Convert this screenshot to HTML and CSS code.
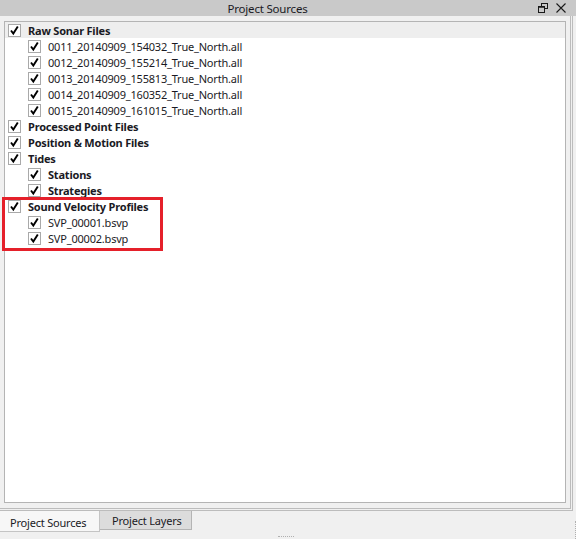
FILE: index.html
```html
<!DOCTYPE html>
<html lang="en">

<head>
    <meta charset="UTF-8">
    <title>Project Sources</title>
    <link rel="stylesheet" href="styles.css">
</head>

<body>
    <div class="window">
        <div class="titlebar">
            <div class="title">Project Sources</div>
            <div class="title-icons">
                <svg width="11" height="10" viewBox="0 0 11 10">
                    <rect x="3.5" y="0.5" width="6" height="5" fill="none" stroke="#1a1a1a"/>
                    <rect x="0.5" y="3.5" width="6" height="6" fill="#c9c9c9" stroke="#1a1a1a"/>
                    <line x1="0.5" y1="4" x2="6.5" y2="4" stroke="#1a1a1a" stroke-width="1.5"/>
                </svg>
                <svg width="10" height="10" viewBox="0 0 10 10">
                    <path d="M0.5 0.5 L9.5 9.5 M9.5 0.5 L0.5 9.5" stroke="#1a1a1a" stroke-width="1.1"/>
                </svg>
            </div>
        </div>

        <div class="frame">
            <div class="tree">
                <div class="row current">
                    <span class="check"></span><span class="label bold">Raw Sonar Files</span>
                </div>
                <div class="row child">
                    <span class="check"></span><span class="label">0011_20140909_154032_True_North.all</span>
                </div>
                <div class="row child">
                    <span class="check"></span><span class="label">0012_20140909_155214_True_North.all</span>
                </div>
                <div class="row child">
                    <span class="check"></span><span class="label">0013_20140909_155813_True_North.all</span>
                </div>
                <div class="row child">
                    <span class="check"></span><span class="label">0014_20140909_160352_True_North.all</span>
                </div>
                <div class="row child">
                    <span class="check"></span><span class="label">0015_20140909_161015_True_North.all</span>
                </div>
                <div class="row">
                    <span class="check"></span><span class="label bold">Processed Point Files</span>
                </div>
                <div class="row">
                    <span class="check"></span><span class="label bold">Position &amp; Motion Files</span>
                </div>
                <div class="row">
                    <span class="check"></span><span class="label bold">Tides</span>
                </div>
                <div class="row child">
                    <span class="check"></span><span class="label bold">Stations</span>
                </div>
                <div class="row child">
                    <span class="check"></span><span class="label bold">Strategies</span>
                </div>
                <div class="row">
                    <span class="check"></span><span class="label bold">Sound Velocity Profiles</span>
                </div>
                <div class="row child">
                    <span class="check"></span><span class="label">SVP_00001.bsvp</span>
                </div>
                <div class="row child">
                    <span class="check"></span><span class="label">SVP_00002.bsvp</span>
                </div>
            </div>
        </div>

        <div class="tabs">
            <div class="tab active">Project Sources</div>
            <div class="tab">Project Layers</div>
        </div>

        <!-- annotation box over the SVP group -->
        <div class="highlight"></div>
        <div class="grip-h"></div>
        <div class="grip-v"></div>
    </div>
</body>

</html>
```

FILE: styles.css
```css
* {
    margin: 0;
    padding: 0;
    box-sizing: border-box;
}

body {
    font-family: 'Noto Sans', 'Open Sans', sans-serif;
    font-size: 11px;
    letter-spacing: -0.2px;
    color: #1a1a24;
    background: #f0f0f0;
}

.window {
    position: relative;
    width: 576px;
    height: 539px;
    background: #f0f0f0;
    overflow: hidden;
}

.titlebar {
    height: 16px;
    background: #c9c9c9;
    display: flex;
    align-items: center;
}

.title {
    flex: 1;
    text-align: center;
    line-height: 16px;
    padding-top: 1px;
    font-size: 11.5px;
}

.title-icons {
    width: 41px;
    display: flex;
    align-items: center;
    gap: 7px;
    padding-left: 3px;
    margin-top: -1px;
}

.title-icons svg {
    display: block;
}

.frame {
    width: 573px;
    height: 495px;
    padding: 5px 4px 5px 4px;
    border-right: 3px double #bcbcbc;
    border-bottom: 3px double #bcbcbc;
}

.tree {
    height: 100%;
    background: #fff;
    border: 1px solid #b4b4b4;
    width: 562px;
}

.row {
    height: 16px;
    display: flex;
    align-items: center;
    padding-left: 3px;
}

.row.current {
    background: #eeeeee;
}

.row.child {
    padding-left: 23px;
}

.check {
    width: 13px;
    height: 13px;
    border: 1px solid #a9a9a9;
    background: #fff url("data:image/svg+xml,%3Csvg xmlns='http://www.w3.org/2000/svg' width='11' height='11'%3E%3Cpath d='M2 5.5 L4.3 8.5 L8.8 1.5' fill='none' stroke='%23000' stroke-width='1.9'/%3E%3C/svg%3E") center no-repeat;
    flex: none;
}

.label {
    margin-left: 7px;
    white-space: nowrap;
    line-height: 16px;
    position: relative;
    top: 1px;
}

.label.bold {
    font-weight: 700;
}

.tabs {
    display: flex;
    align-items: flex-start;
    height: 28px;
}

.tab {
    width: 92px;
    height: 19px;
    padding: 0 0 0 12px;
    line-height: 19px;
    background: #dcdcdc;
    border-right: 1px solid #b4b4b4;
    border-bottom: 1px solid #b4b4b4;
}

.tab.active {
    width: 100px;
    height: 21px;
    padding: 0 0 0 10px;
    line-height: 23px;
    background: #f7f7f7;
    border-right: 1px solid #c4c4c4;
    border-bottom: 1px solid #c4c4c4;
}

.highlight {
    position: absolute;
    left: 2px;
    top: 197px;
    width: 161px;
    height: 54px;
    border: 3px solid #e5202a;
}

.grip-h {
    position: absolute;
    left: 278px;
    top: 536px;
    width: 16px;
    border-top: 1px dotted #b0b0b0;
}

.grip-v {
    position: absolute;
    left: 575px;
    top: 521px;
    height: 18px;
    border-left: 1px dotted #b0b0b0;
}
```
